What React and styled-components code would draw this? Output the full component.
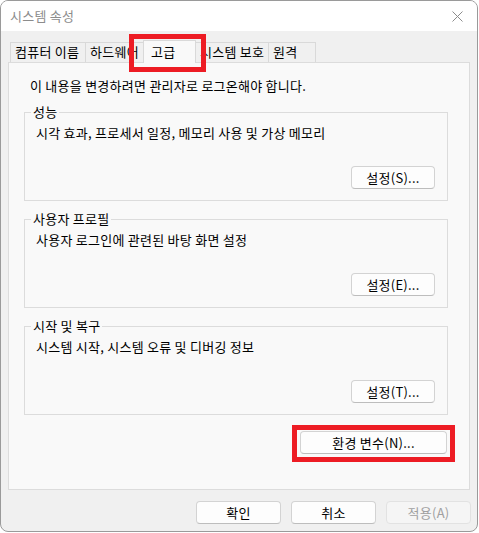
import React from 'react';
import styled, { createGlobalStyle } from 'styled-components';

const GlobalStyle = createGlobalStyle`
  html, body {
    margin: 0;
    padding: 0;
    background: #ffffff;
  }
  body {
    font-family: "Noto Sans CJK KR", "Noto Sans", sans-serif;
    font-size: 13px;
    letter-spacing: 0.25px;
    color: #000;
  }
`;

const Window = styled.div`
  box-sizing: border-box;
  width: 478px;
  height: 532px;
  border: 1px solid #9a9a9a;
  border-radius: 8px;
  overflow: hidden;
  background: #f0f0f0;
  display: flex;
  flex-direction: column;
`;

const TitleBar = styled.div`
  height: 30px;
  background: #ffffff;
  display: flex;
  align-items: center;
  justify-content: space-between;
  padding: 0 9px;
`;

const Title = styled.span`
  color: #8c8c8c;
  line-height: 16px;
`;

const CloseIcon = styled.svg`
  width: 11px;
  height: 11px;
  margin-right: 5px;
`;

const Body = styled.div`
  padding: 9px 0 0 7px;
`;

const TabRow = styled.div`
  position: relative;
  display: flex;
  align-items: flex-end;
  height: 22px;
  padding-left: 3px;
`;

const Tab = styled.div`
  position: relative;
  box-sizing: border-box;
  width: ${(p) => p.$w}px;
  height: ${(p) => (p.$active ? 23 : 20)}px;
  margin-left: -1px;
  margin-bottom: ${(p) => (p.$active ? -1 : 0)}px;
  padding: ${(p) => (p.$active ? '3px 0 0 7px' : '1px 0 0 4px')};
  border: 1px solid #d9d9d9;
  border-bottom: none;
  background: ${(p) => (p.$active ? '#f9f9f9' : '#f0f0f0')};
  z-index: ${(p) => (p.$active ? 1 : 0)};
  line-height: 16px;
  white-space: nowrap;
`;

const Highlight = styled.span`
  position: absolute;
  box-sizing: border-box;
  border: 5px solid #ed1c24;
  z-index: 5;
  pointer-events: none;
`;

const TabMark = styled(Highlight)`
  left: -15px;
  right: -11px;
  top: -7px;
  bottom: -9px;
`;

const ButtonMark = styled(Highlight)`
  left: -9px;
  right: -9px;
  top: -7px;
  bottom: -9px;
`;

const Panel = styled.div`
  box-sizing: border-box;
  width: 462px;
  height: 428px;
  border: 1px solid #dcdcdc;
  background: #f9f9f9;
  padding: 15px 21px 0 15px;
  display: flex;
  flex-direction: column;
  gap: 10px;
`;

const Intro = styled.div`
  line-height: 16px;
  padding-left: 6px;
`;

const Group = styled.fieldset`
  margin: 0;
  padding: 5px 12px 11px 11px;
  border: 1px solid #dcdcdc;
  display: flex;
  flex-direction: column;
  align-items: flex-end;
  min-width: 0;
`;

const Legend = styled.legend`
  margin-left: -5px;
  padding: 0 2px;
  line-height: 16px;
`;

const Description = styled.div`
  align-self: stretch;
  line-height: 16px;
  margin-bottom: 25px;
`;

const Button = styled.button`
  position: relative;
  box-sizing: border-box;
  width: ${(p) => p.$w || 84}px;
  height: 23px;
  padding: 0;
  border: 1px solid #d3d3d3;
  border-bottom-color: #bdbdbd;
  border-radius: 4px;
  background: ${(p) => (p.disabled ? '#f5f5f5' : '#fdfdfd')};
  color: ${(p) => (p.disabled ? '#a0a0a0' : '#000')};
  font-family: inherit;
  font-size: 13px;
  letter-spacing: 0.25px;
  line-height: 16px;
  ${(p) => p.disabled && 'border-color: #e2e2e2;'}
`;

const EnvRow = styled.div`
  display: flex;
  justify-content: flex-end;
  margin-top: 6px;
  padding-right: 1px;
`;

const Footer = styled.div`
  width: 463px;
  margin-top: 11px;
  display: flex;
  justify-content: flex-end;
  gap: 10px;
`;

const tabs = [
  { label: '컴퓨터 이름', w: 76 },
  { label: '하드웨어', w: 59 },
  { label: '고급', w: 53, active: true },
  { label: '시스템 보호', w: 74 },
  { label: '원격', w: 48 },
];

const groups = [
  { title: '성능', desc: '시각 효과, 프로세서 일정, 메모리 사용 및 가상 메모리', button: '설정(S)...' },
  { title: '사용자 프로필', desc: '사용자 로그인에 관련된 바탕 화면 설정', button: '설정(E)...' },
  { title: '시작 및 복구', desc: '시스템 시작, 시스템 오류 및 디버깅 정보', button: '설정(T)...' },
];

const App = () => {
  return (
    <>
      <GlobalStyle />
      <Window>
        <TitleBar>
          <Title>시스템 속성</Title>
          <CloseIcon viewBox="0 0 11 11">
            <path d="M0.5 0.5 L10.5 10.5 M10.5 0.5 L0.5 10.5" stroke="#8c8c8c" strokeWidth="1" fill="none" />
          </CloseIcon>
        </TitleBar>
        <Body>
          <TabRow>
            {tabs.map((tab) => (
              <Tab key={tab.label} $w={tab.w} $active={tab.active}>
                {tab.label}
                {tab.active && <TabMark />}
              </Tab>
            ))}
          </TabRow>
          <Panel>
            <Intro>이 내용을 변경하려면 관리자로 로그온해야 합니다.</Intro>
            {groups.map((g) => (
              <Group key={g.title}>
                <Legend>{g.title}</Legend>
                <Description>{g.desc}</Description>
                <Button>{g.button}</Button>
              </Group>
            ))}
            <EnvRow>
              <Button $w={147}>
                환경 변수(N)...
                <ButtonMark />
              </Button>
            </EnvRow>
          </Panel>
          <Footer>
            <Button $w={85}>확인</Button>
            <Button $w={85}>취소</Button>
            <Button $w={85} disabled>적용(A)</Button>
          </Footer>
        </Body>
      </Window>
    </>
  );
};

export default App;
